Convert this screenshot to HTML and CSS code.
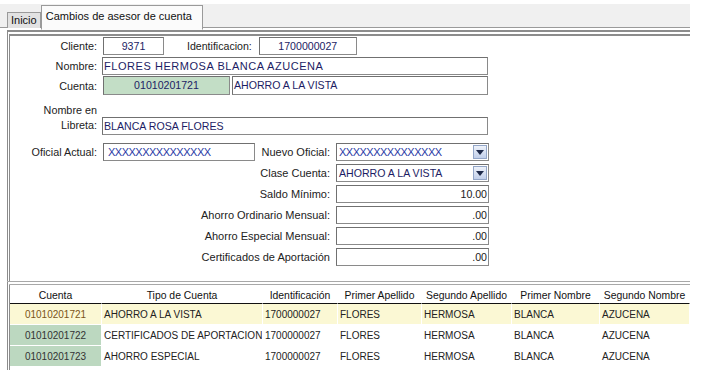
FILE: index.html
```html
<!DOCTYPE html>
<html lang="es">
<head>
    <meta charset="UTF-8">
    <title>Cambios de asesor de cuenta</title>
    <link rel="stylesheet" href="styles.css">
</head>
<body>
    <div class="tabs">
        <div class="tab">Inicio</div>
        <div class="tab active">Cambios de asesor de cuenta</div>
    </div>

    <div class="frame form">
        <div class="row">
            <label class="lbl">Cliente:</label>
            <div class="box center w-cliente">9371</div>
            <label class="lbl-inline">Identificacion:</label>
            <div class="box center w-ident">1700000027</div>
        </div>
        <div class="row">
            <label class="lbl">Nombre:</label>
            <div class="box w-full wide">FLORES HERMOSA BLANCA AZUCENA</div>
        </div>
        <div class="row">
            <label class="lbl">Cuenta:</label>
            <div class="box center green w-cuenta">01010201721</div>
            <div class="box w-tipo">AHORRO A LA VISTA</div>
        </div>
        <div class="row tall">
            <label class="lbl two-lines">Nombre en<br>Libreta:</label>
            <div class="box w-full">BLANCA ROSA FLORES</div>
        </div>
        <div class="row oficial">
            <label class="lbl">Oficial Actual:</label>
            <div class="box blue w-oficial">XXXXXXXXXXXXXXX</div>
            <label class="lbl-right narrow">Nuevo Oficial:</label>
            <div class="box combo blue">
                <span>XXXXXXXXXXXXXXX</span>
                <span class="drop"><svg width="8" height="5" viewBox="0 0 8 5"><path d="M0 0h8L4 5z" fill="#1e2a4a"/></svg></span>
            </div>
        </div>
        <div class="row money">
            <label class="lbl-right">Clase Cuenta:</label>
            <div class="box combo">
                <span>AHORRO A LA VISTA</span>
                <span class="drop"><svg width="8" height="5" viewBox="0 0 8 5"><path d="M0 0h8L4 5z" fill="#1e2a4a"/></svg></span>
            </div>
        </div>
        <div class="row money">
            <label class="lbl-right">Saldo Mínimo:</label>
            <div class="box num">10.00</div>
        </div>
        <div class="row money">
            <label class="lbl-right">Ahorro Ordinario Mensual:</label>
            <div class="box num">.00</div>
        </div>
        <div class="row money">
            <label class="lbl-right">Ahorro Especial Mensual:</label>
            <div class="box num">.00</div>
        </div>
        <div class="row money">
            <label class="lbl-right">Certificados de Aportación</label>
            <div class="box num">.00</div>
        </div>
    </div>

    <div class="frame grid">
        <table class="accounts">
            <thead>
                <tr>
                    <th class="c1">Cuenta</th>
                    <th class="c2">Tipo de Cuenta</th>
                    <th class="c3">Identificación</th>
                    <th class="c4">Primer Apellido</th>
                    <th class="c5">Segundo Apellido</th>
                    <th class="c6">Primer Nombre</th>
                    <th class="c7">Segundo Nombre</th>
                </tr>
            </thead>
            <tbody>
                <tr class="selected">
                    <td class="acct">01010201721</td>
                    <td>AHORRO A LA VISTA</td>
                    <td>1700000027</td>
                    <td>FLORES</td>
                    <td>HERMOSA</td>
                    <td>BLANCA</td>
                    <td>AZUCENA</td>
                </tr>
                <tr>
                    <td class="acct">01010201722</td>
                    <td>CERTIFICADOS DE APORTACION</td>
                    <td>1700000027</td>
                    <td>FLORES</td>
                    <td>HERMOSA</td>
                    <td>BLANCA</td>
                    <td>AZUCENA</td>
                </tr>
                <tr>
                    <td class="acct">01010201723</td>
                    <td>AHORRO ESPECIAL</td>
                    <td>1700000027</td>
                    <td>FLORES</td>
                    <td>HERMOSA</td>
                    <td>BLANCA</td>
                    <td>AZUCENA</td>
                </tr>
            </tbody>
        </table>
    </div>
</body>
</html>
```

FILE: styles.css
```css
body {
    margin: 0;
    font-family: "Liberation Sans", Arial, sans-serif;
    font-size: 11px;
    color: #222;
    background-color: #fff;
}
.tabs {
    width: 690px;
    height: 24px;
    margin-top: 4px;
    padding-left: 7px;
    box-sizing: border-box;
    background-color: #f0f0f0;
    border-bottom: 1px solid #9a9a9a;
    display: flex;
    align-items: flex-end;
}
.tab {
    height: 15px;
    line-height: 15px;
    padding: 0 3px;
    margin-bottom: -1px;
    background-color: #e2e2e2;
    border: 1px solid #9a9a9a;
    border-bottom: none;
    color: #111;
}
.tab.active {
    height: 23px;
    line-height: 20px;
    padding: 0 3px 0 4px;
    width: 153px;
    background-color: #fbfbfb;
    border-bottom: 1px solid #fbfbfb;
    position: relative;
    top: 2px;
}
.frame {
    margin-left: 7px;
    width: 683px;
    box-sizing: border-box;
    border-left: 3px double #8c8c8c;
}
.form {
    height: 251px;
    margin-top: 2px;
    border-top: 6px double #8c8c8c;
}
.row {
    display: flex;
    align-items: center;
    height: 19px;
    margin-top: 1px;
}
.row:first-child {
    margin-top: 0;
}
.row.tall {
    height: 32px;
    margin-top: 8px;
    align-items: flex-end;
}
.row.oficial {
    height: 18px;
    margin-top: 8px;
}
.row.money {
    height: 18px;
    margin-top: 3px;
}
.lbl {
    width: 87px;
    margin-right: 6px;
    text-align: right;
    font-size: 10.8px;
}
.two-lines {
    align-self: flex-start;
    line-height: 15px;
}
.lbl-inline {
    margin-left: 23px;
    margin-right: 7px;
    font-size: 10.6px;
}
.lbl-right {
    width: 320px;
    margin-right: 6px;
    text-align: right;
}
.lbl-right.narrow {
    width: 75px;
}
.box {
    height: 18px;
    line-height: 16px;
    box-sizing: border-box;
    border: 1px solid #707070;
    border-right-color: #8a8a8a;
    border-bottom-color: #8a8a8a;
    padding: 0 2px;
    font-size: 10.6px;
    color: #1c1c64;
    background-color: #fff;
    white-space: nowrap;
    overflow: hidden;
}
.center {
    text-align: center;
}
.w-cliente {
    width: 61px;
}
.w-ident {
    width: 98px;
}
.w-full {
    width: 386px;
    margin-left: -1px;
    padding-left: 1px;
}
.wide {
    font-size: 11px;
    letter-spacing: 0.55px;
}
.w-cuenta {
    width: 127px;
}
.green {
    height: 19px;
    background-color: #c3dec6;
}
.w-tipo {
    width: 256px;
    margin-left: 2px;
    height: 19px;
    padding-left: 1px;
}
.w-oficial {
    width: 152px;
    padding-left: 4px;
}
.blue {
    font-size: 11px;
    color: #2a3aa6;
    letter-spacing: -0.5px;
}
.combo {
    width: 153px;
    display: flex;
    align-items: center;
    justify-content: space-between;
    padding: 0 1px 0 2px;
}
.drop {
    width: 14px;
    height: 14px;
    box-sizing: border-box;
    border: 1px solid #93a6c8;
    background: linear-gradient(#eef2fa, #c1cfea);
    display: flex;
    align-items: center;
    justify-content: center;
    letter-spacing: 0;
}
.num {
    width: 153px;
    text-align: right;
    color: #222;
    padding-right: 1px;
}
.grid {
    height: 90px;
    overflow: hidden;
    border-top: 4px double #a8a8a8;
}
.accounts {
    margin-top: 3px;
    border-collapse: separate;
    border-spacing: 0;
    table-layout: fixed;
    width: 680px;
}
.accounts th {
    box-sizing: border-box;
    height: 16px;
    padding: 0;
    font-size: 10.4px;
    font-weight: normal;
    text-align: center;
    white-space: nowrap;
    color: #111;
    border-bottom: 1px solid #111;
    border-right: 1px solid #fff;
}
.accounts td {
    height: 20px;
    padding: 0 0 0 2px;
    font-size: 10px;
    white-space: nowrap;
    overflow: hidden;
    color: #222;
    border-bottom: 1px solid #fff;
    border-right: 1px solid #fff;
}
.accounts td.acct {
    text-align: center;
    padding: 0;
    background-color: #bcd8c0;
    color: #333;
}
.c1 { width: 92px; }
.c2 { width: 161px; }
.c3 { width: 75px; }
.c4 { width: 84px; }
.c5 { width: 90px; }
.c6 { width: 88px; }
.c7 { width: 90px; }
.selected td {
    background-color: #fbf8d4;
}
.accounts .selected td.acct {
    background-color: #fbf8d4;
    color: #7a5418;
}
```
